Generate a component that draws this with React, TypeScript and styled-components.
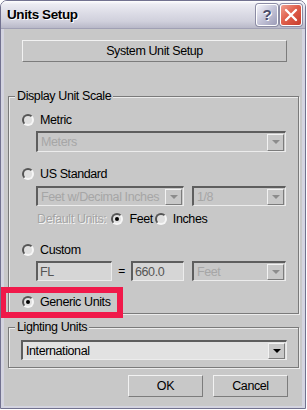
import React from "react";
import styled, { createGlobalStyle, css } from "styled-components";

const Global = createGlobalStyle`
  html, body { margin: 0; padding: 0; background: #ffffff; }
  body { font-family: "Liberation Sans", Arial, sans-serif; font-size: 12px; letter-spacing: -0.4px; color: #000; }
  * { box-sizing: border-box; }
`;

const Window = styled.div`
  position: relative;
  width: 306px;
  height: 409px;
  display: flex;
  flex-direction: column;
  border-radius: 7px 7px 0 0;
  overflow: hidden;
  border: 1px solid #727290;
`;

const TitleBar = styled.div`
  height: 28px;
  flex: none;
  display: flex;
  align-items: center;
  padding: 0 3px 0 6px;
  background: linear-gradient(#ffffff 0%, #ebebf2 12%, #dcdce6 45%, #d0d0dc 75%, #b8b8c8 100%);
  border-bottom: 1px solid #a0a0b4;
`;

const Title = styled.div`
  flex: 1;
  font-family: "Liberation Sans", Arial, sans-serif;
  font-weight: bold;
  font-size: 13.5px;
  letter-spacing: -0.4px;
  color: #000;
  text-shadow: 1px 1px 0 #ffffff;
`;

const CapBtn = styled.div<{ $close?: boolean }>`
  width: 22px;
  height: 22px;
  margin-left: 2px;
  border-radius: 3px;
  border: 1px solid #ffffff;
  box-shadow: 0 0 0 1px #8c8ca4;
  display: flex;
  align-items: center;
  justify-content: center;
  ${(p) =>
    p.$close
      ? css`
          background: linear-gradient(135deg, #f0a090 0%, #e0604c 45%, #c83c2c 100%);
        `
      : css`
          background: linear-gradient(135deg, #f4f4fa 0%, #c4c4d8 50%, #9c9cb8 100%);
        `}
`;

const QMark = styled.span`
  font-family: "Liberation Sans", Arial, sans-serif;
  font-weight: bold;
  font-size: 15px;
  color: #4a4a68;
  text-shadow: 1px 1px 0 #ffffff;
`;

const Body = styled.div`
  flex: 1;
  background: #c8c8c8;
  border-left: 3px solid #d4d4e0;
  border-right: 3px solid #d4d4e0;
  border-bottom: 2px solid #d4d4e0;
  display: flex;
  flex-direction: column;
  padding: 0;
`;

const raised = css`
  background: #c8c8c8;
  border-top: 1px solid #f2f2f2;
  border-left: 1px solid #f2f2f2;
  border-right: 1px solid #7c7c7c;
  border-bottom: 1px solid #7c7c7c;
`;

const PushButton = styled.div<{ $w: number }>`
  ${raised};
  width: ${(p) => p.$w}px;
  height: 22px;
  display: flex;
  align-items: center;
  justify-content: center;
  font-size: 12.5px;
`;

const TopButtonRow = styled.div`
  margin: 11px 0 0 18px;
`;

const Group = styled.fieldset<{ $mt: number }>`
  margin: ${(p) => p.$mt}px 3px 0 4px;
  padding: 0;
  border: 1px solid #7a7a7a;
  box-shadow: inset 1px 1px 0 #ececec, 1px 1px 0 #ececec;
  min-width: 0;
`;

const Legend = styled.legend`
  margin-left: 6px;
  padding: 0 2px;
  line-height: 14px;
  font-size: 12.5px;
  background: #c8c8c8;
`;

const GroupContent = styled.div<{ $pb: number; $pl: number }>`
  display: flex;
  flex-direction: column;
  padding: 0 0 ${(p) => p.$pb}px ${(p) => p.$pl}px;
`;

const Row = styled.div<{ $mt: number; $indent?: number }>`
  display: flex;
  align-items: center;
  height: 14px;
  margin-top: ${(p) => p.$mt}px;
  margin-left: ${(p) => p.$indent ?? 0}px;
  white-space: nowrap;
`;

const FieldRow = styled.div<{ $mt: number; $ml?: number; $gap?: number }>`
  display: flex;
  align-items: center;
  margin-top: ${(p) => p.$mt}px;
  margin-left: ${(p) => p.$ml ?? 14}px;
  gap: ${(p) => p.$gap ?? 8}px;
`;

const RadioCircle = styled.span<{ $on?: boolean; $ml?: number }>`
  position: relative;
  flex: none;
  width: 12px;
  height: 12px;
  margin-left: ${(p) => p.$ml ?? 0}px;
  border-radius: 50%;
  border: 2px solid;
  border-color: #555555 #f6f6f6 #f6f6f6 #555555;
  background: #e0e0e0;
  ${(p) =>
    p.$on &&
    css`
      &::after {
        content: "";
        position: absolute;
        left: 2px;
        top: 2px;
        width: 4px;
        height: 4px;
        border-radius: 50%;
        background: #000;
      }
    `}
`;

const Label = styled.span<{ $dim?: boolean; $ml?: number }>`
  margin-left: ${(p) => p.$ml ?? 6}px;
  font-size: 12.5px;
  color: ${(p) => (p.$dim ? "#a4a4a4" : "#000")};
  ${(p) => p.$dim && css`text-shadow: 1px 1px 0 #f4f4f4;`}
`;

const SelectBox = styled.div<{ $w: number; $h?: number; $light?: boolean }>`
  width: ${(p) => p.$w}px;
  height: ${(p) => p.$h ?? 20}px;
  display: flex;
  align-items: center;
  border-top: 2px solid #5e5e5e;
  border-left: 2px solid #5e5e5e;
  border-right: 1px solid #ececec;
  border-bottom: 1px solid #ececec;
  background: ${(p) => (p.$light ? "#e2e2e2" : "#c8c8c8")};
  flex: none;
`;

const SelectText = styled.span<{ $dim?: boolean }>`
  flex: 1;
  padding-left: 3px;
  font-size: 12.5px;
  color: ${(p) => (p.$dim ? "#a6a6a6" : "#000")};
  white-space: nowrap;
  overflow: hidden;
`;

const ArrowBtn = styled.span<{ $h: number }>`
  ${raised};
  width: 17px;
  height: ${(p) => p.$h}px;
  margin-right: 1px;
  display: flex;
  align-items: center;
  justify-content: center;
  flex: none;
`;

const Arrow = styled.span<{ $dark?: boolean }>`
  width: 0;
  height: 0;
  border-left: 4px solid transparent;
  border-right: 4px solid transparent;
  border-top: 4px solid ${(p) => (p.$dark ? "#000" : "#8c8c8c")};
`;

const TextField = styled.div<{ $w: number }>`
  width: ${(p) => p.$w}px;
  height: 20px;
  display: flex;
  align-items: center;
  padding-left: 2px;
  border-top: 2px solid #5e5e5e;
  border-left: 2px solid #5e5e5e;
  border-right: 1px solid #ececec;
  border-bottom: 1px solid #ececec;
  background: #d6d6d6;
  color: #555;
  font-size: 12.5px;
  flex: none;
`;

const Equals = styled.span`
  width: 19px;
  text-align: center;
  color: #000;
`;

const ButtonRow = styled.div`
  display: flex;
  justify-content: flex-end;
  gap: 10px;
  margin: 7px 14px 0 0;
`;

const Highlight = styled.div`
  position: absolute;
  left: -1px;
  top: 286px;
  width: 123px;
  height: 31px;
  border: 6px solid #f0194a;
  pointer-events: none;
`;

function Dropdown({ w, text, dim = true, light, h = 20, ml = 0 }: { w: number; text: string; dim?: boolean; light?: boolean; h?: number; ml?: number }) {
  return (
    <SelectBox $w={w} $h={h} $light={light} style={ml ? { marginLeft: ml } : undefined}>
      <SelectText $dim={dim}>{text}</SelectText>
      <ArrowBtn $h={h - 4}>
        <Arrow $dark={!dim} />
      </ArrowBtn>
    </SelectBox>
  );
}

export default function App() {
  return (
    <>
      <Global />
      <Window>
        <TitleBar>
          <Title>Units Setup</Title>
          <CapBtn>
            <QMark>?</QMark>
          </CapBtn>
          <CapBtn $close>
            <svg width="14" height="14" viewBox="0 0 14 14">
              <path d="M2 2 L12 12 M12 2 L2 12" stroke="#ffffff" strokeWidth="2.4" strokeLinecap="round" />
            </svg>
          </CapBtn>
        </TitleBar>
        <Body>
          <TopButtonRow>
            <PushButton $w={265}>System Unit Setup</PushButton>
          </TopButtonRow>

          <Group $mt={27}>
            <Legend>Display Unit Scale</Legend>
            <GroupContent $pb={4} $pl={13}>
              <Row $mt={10}>
                <RadioCircle />
                <Label>Metric</Label>
              </Row>
              <FieldRow $mt={4}>
                <Dropdown w={250} h={21} text="Meters" />
              </FieldRow>
              <Row $mt={15}>
                <RadioCircle />
                <Label>US Standard</Label>
              </Row>
              <FieldRow $mt={5}>
                <Dropdown w={148} text="Feet w/Decimal Inches" />
                <Dropdown w={94} text="1/8" />
              </FieldRow>
              <Row $mt={6} $indent={15}>
                <Label $dim $ml={0}>Default Units:</Label>
                <RadioCircle $on $ml={5} />
                <Label>Feet</Label>
                <RadioCircle $ml={2} />
                <Label>Inches</Label>
              </Row>
              <Row $mt={17}>
                <RadioCircle />
                <Label>Custom</Label>
              </Row>
              <FieldRow $mt={4} $gap={0}>
                <TextField $w={76}>FL</TextField>
                <Equals>=</Equals>
                <TextField $w={53}>660.0</TextField>
                <Dropdown w={94} text="Feet" ml={8} />
              </FieldRow>
              <Row $mt={14}>
                <RadioCircle $on />
                <Label>Generic Units</Label>
              </Row>
            </GroupContent>
          </Group>

          <Group $mt={6}>
            <Legend>Lighting Units</Legend>
            <GroupContent $pb={7} $pl={12}>
              <FieldRow $mt={6} $ml={0}>
                <Dropdown w={266} text="International" dim={false} light />
              </FieldRow>
            </GroupContent>
          </Group>

          <ButtonRow>
            <PushButton $w={75}>OK</PushButton>
            <PushButton $w={75}>Cancel</PushButton>
          </ButtonRow>
        </Body>
        <Highlight />
      </Window>
    </>
  );
}
